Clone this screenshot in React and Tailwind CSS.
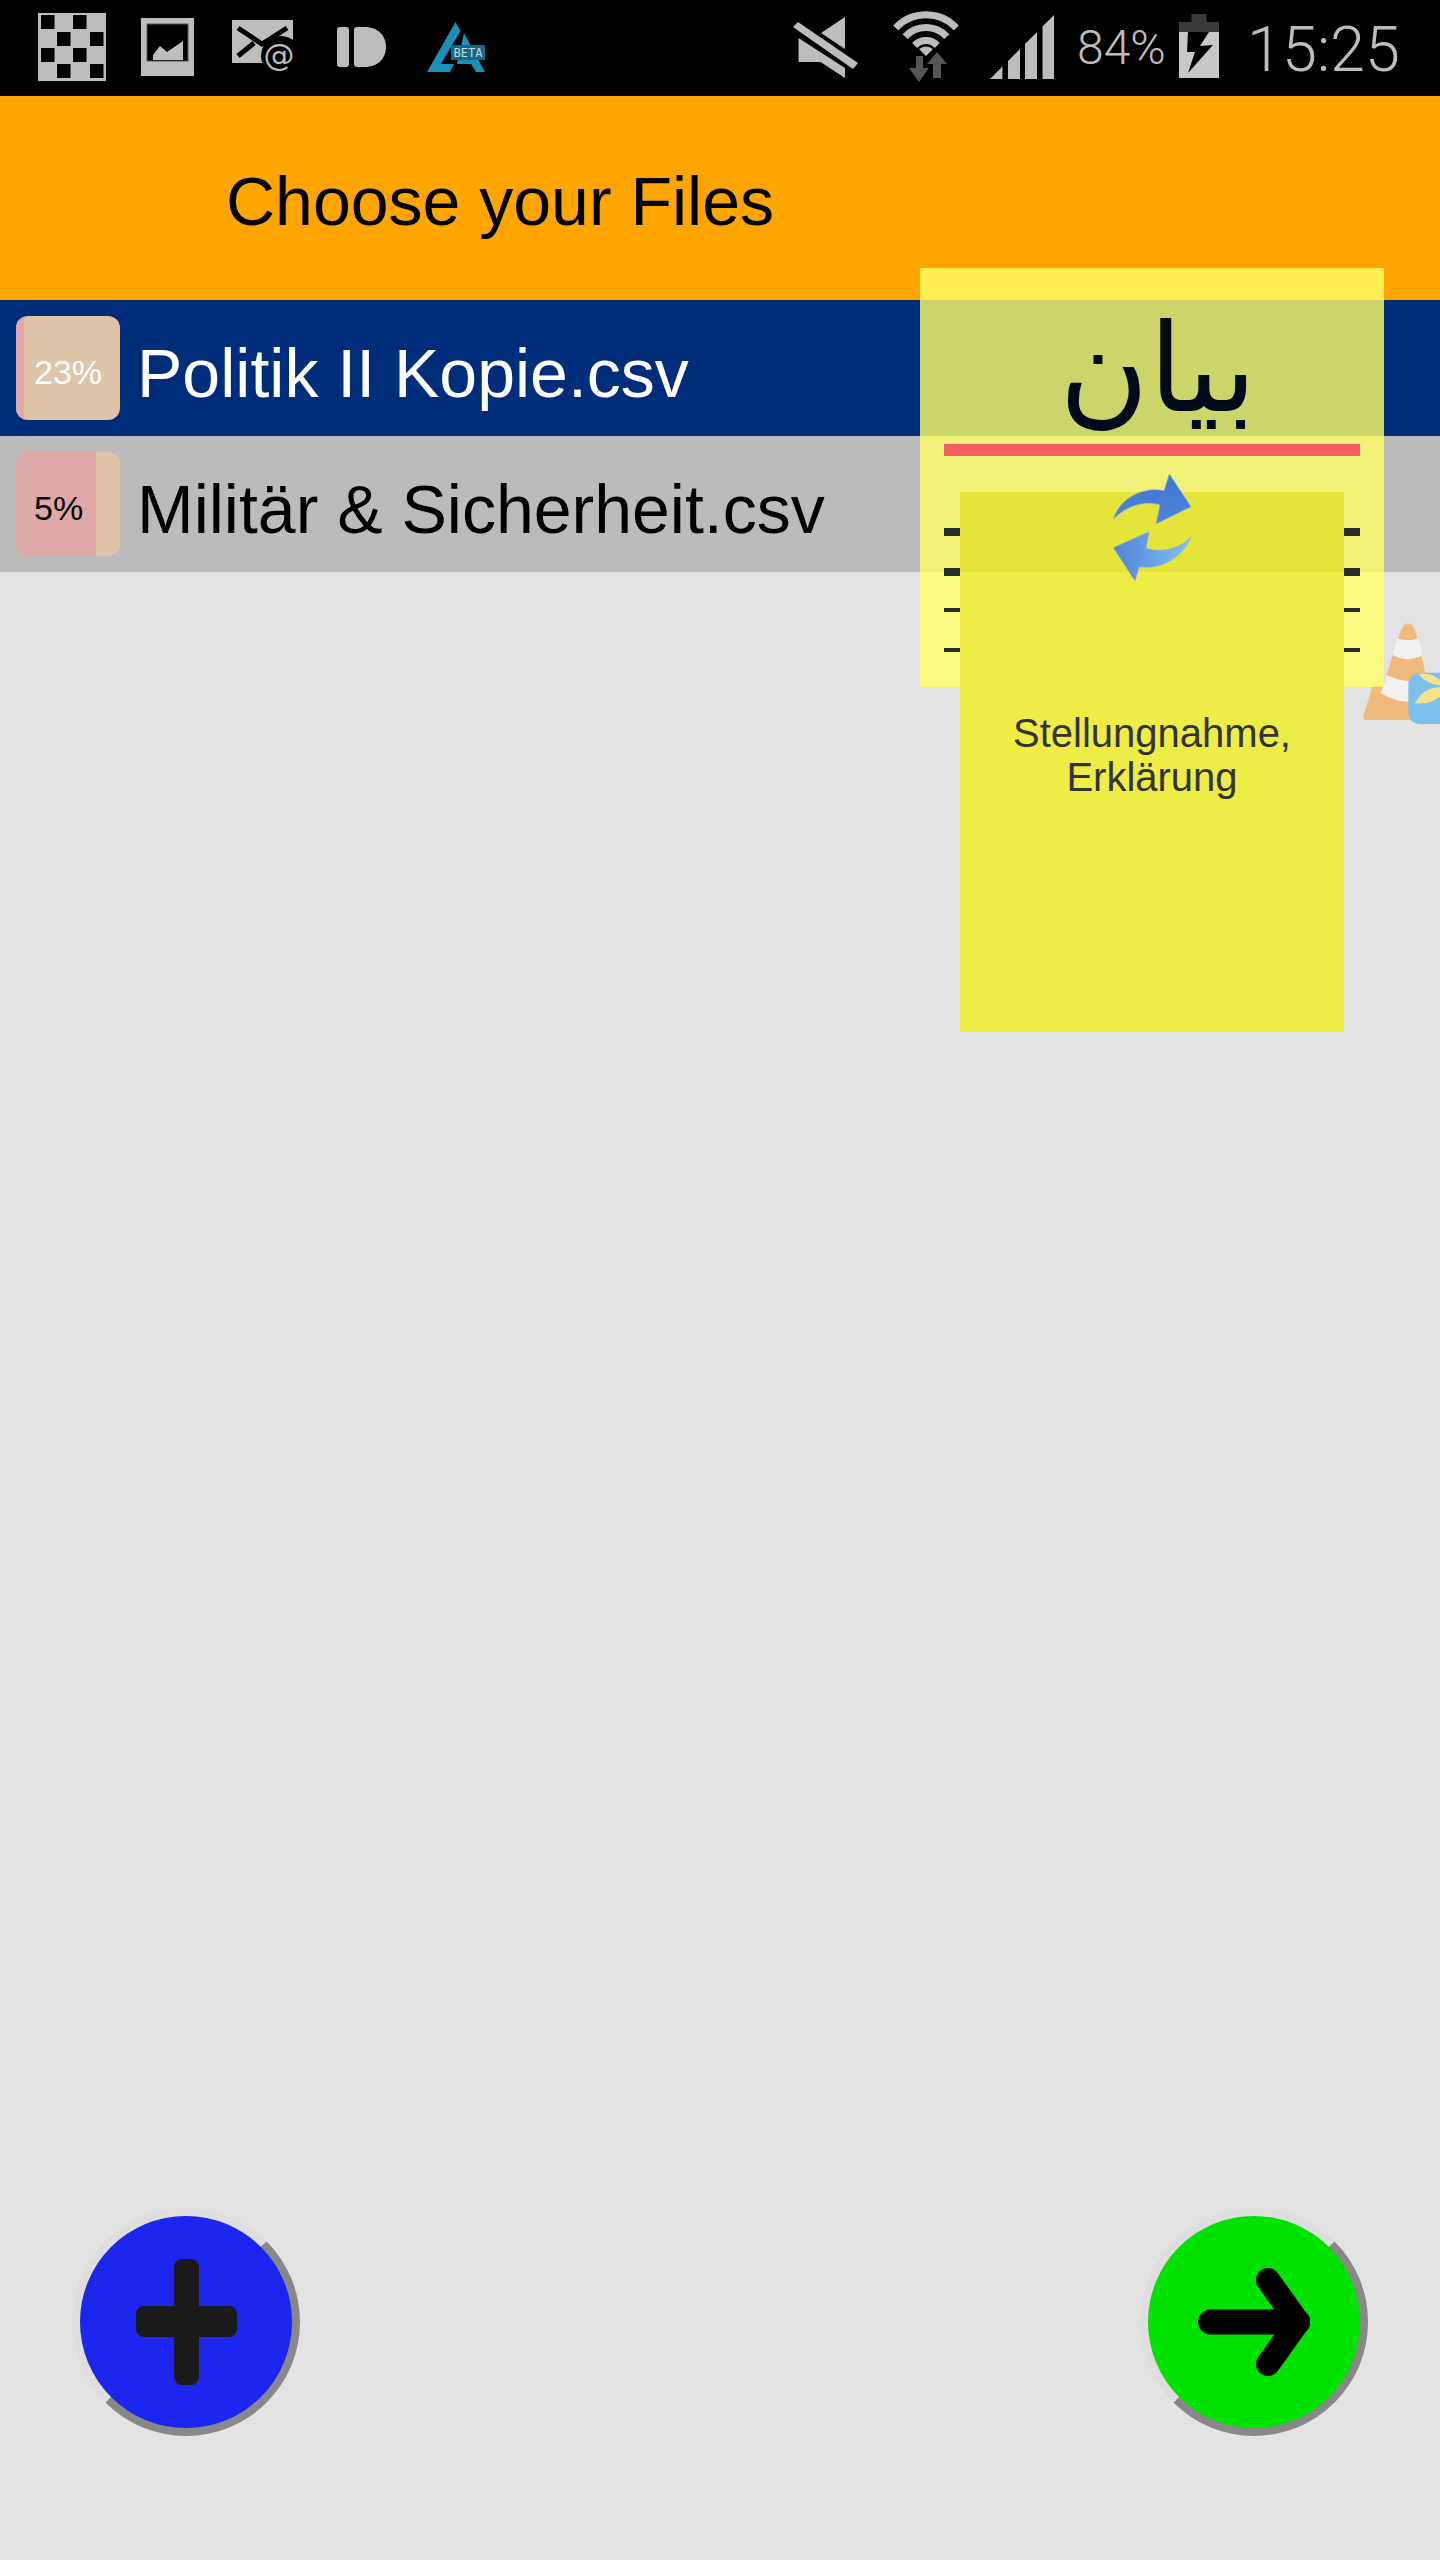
import React from 'react';

const GRAY = '#bdbdbd';

// checker / notification icon, all status icons use the 96px bar height as their y scale
const CheckerIcon = () => {
  const holes = [
    [3, 2], [35, 2], [19, 19], [52, 19],
    [3, 35], [35, 35], [19, 51], [52, 51],
  ];
  return (
    <svg width="68" height="96" viewBox="0 0 68 96" className="shrink-0">
      <rect x="0" y="13" width="68" height="68" fill={GRAY} />
      {holes.map(([x, y]) => (
        <rect key={`${x}-${y}`} x={x} y={y + 13} width="13.5" height="14" fill="#000" />
      ))}
    </svg>
  );
};

const PictureIcon = () => (
  <svg width="53" height="96" viewBox="0 0 53 96" className="ml-[35px] shrink-0">
    <rect x="0" y="18" width="53" height="58" fill={GRAY} />
    <rect x="6" y="24" width="41" height="37" fill="#000" stroke="#555" strokeWidth="1" />
    <path d="M12 60 L12 55 L19 46 L26 52 L42 41 L42 60 Z" fill={GRAY} />
  </svg>
);

const MailIcon = () => (
  <svg width="64" height="96" viewBox="0 0 64 96" className="ml-[38px] shrink-0">
    <rect x="0" y="20" width="61" height="43" fill={GRAY} />
    <path d="M6 28 L30 44 L55 28 M6 56 L22 43" stroke="#000" strokeWidth="5" fill="none" />
    <circle cx="49" cy="56" r="20" fill="#000" />
    <text x="47" y="66" textAnchor="middle" fill={GRAY} fontSize="31" fontFamily="'DejaVu Sans', sans-serif">@</text>
  </svg>
);

const IdIcon = () => (
  <svg width="49" height="96" viewBox="0 0 49 96" className="ml-[41px] shrink-0">
    <rect x="0" y="27" width="12" height="40" rx="3" fill={GRAY} />
    <path d="M17 30 Q17 27 20 27 L28 27 C41 27 49 36 49 47 C49 58 41 67 28 67 L20 67 Q17 67 17 64 Z" fill={GRAY} />
  </svg>
);

const BetaIcon = () => (
  <svg width="58" height="96" viewBox="0 0 58 96" className="ml-[41px] shrink-0">
    <path d="M0 72 L28.5 22 L33.5 31 L14 64 L27 64 L23 72 Z" fill="#1a90b8" />
    <path d="M37 33 L58 72 L49 72 L44 64 L30 64 Z" fill="#1a90b8" />
    <rect x="24" y="45" width="34" height="15" fill="#0f6a8c" />
    <text x="41" y="57" textAnchor="middle" fill="#c6d6dc" fontSize="12" fontFamily="'DejaVu Sans Mono', monospace">BETA</text>
  </svg>
);

const MuteIcon = () => (
  <svg width="66" height="96" viewBox="0 0 66 96" className="shrink-0">
    <path d="M52 17 L52 49 L28 33 Z" fill={GRAY} />
    <path d="M5.5 38 L52 68 L52 78 L27.5 62 L5.5 62 Z" fill={GRAY} />
    <path d="M5 22 L65 63 L60 69 L0 27 Z" fill={GRAY} />
  </svg>
);

const WifiIcon = () => (
  <svg width="66" height="96" viewBox="0 0 66 96" className="ml-[34px] shrink-0">
    <g stroke={GRAY} strokeWidth="7" fill="none">
      <path d="M2.7 27.8 A41.5 41.5 0 0 1 63.3 27.8" />
      <path d="M12.2 36.6 A28.5 28.5 0 0 1 53.8 36.6" />
      <path d="M21.7 45.5 A15.5 15.5 0 0 1 44.3 45.5" />
    </g>
    <path d="M33 56 L26 49 Q33 44 40 49 Z" fill={GRAY} />
    <path d="M23 56 H30 V68 H36 L26 82 L16 68 H23 Z" fill="#555" />
    <path d="M44 52 L54 64 H48 V78 H40 V64 H34 Z" fill="#555" />
  </svg>
);

const SignalIcon = () => (
  <svg width="64" height="96" viewBox="0 0 64 96" className="ml-[31px] shrink-0">
    <path d="M0 79 L12.4 79 L12.4 66.6 Z" fill={GRAY} />
    <path d="M18 79 L30 79 L30 49 L18 61 Z" fill={GRAY} />
    <path d="M35 79 L47 79 L47 32 L35 44 Z" fill={GRAY} />
    <path d="M52.5 79 L64 79 L64 15 L52.5 26.5 Z" fill={GRAY} />
  </svg>
);

const BatteryIcon = () => (
  <svg width="40" height="96" viewBox="0 0 40 96" className="shrink-0">
    <rect x="12.5" y="14" width="15" height="8" fill="#3a3a3a" />
    <rect x="0" y="22" width="40" height="10" fill="#3a3a3a" />
    <rect x="0" y="32" width="40" height="46" fill="#c8c8c8" />
    <path d="M9 32 L30 32 L21 46 L34 45 L9 73 L16 52 L8 52 Z" fill="#000" />
  </svg>
);

const StatusBar = () => (
  <div className="flex h-[96px] items-start bg-black pl-[38px] pr-[42px] font-['Roboto',sans-serif]">
    <CheckerIcon />
    <PictureIcon />
    <MailIcon />
    <IdIcon />
    <BetaIcon />
    <div className="ml-auto flex items-start">
      <MuteIcon />
      <WifiIcon />
      <SignalIcon />
      <span className="ml-[23px] mt-[21px] w-[102px] whitespace-nowrap text-[48px] leading-[54px] font-light text-[#bdbdbd]">84%</span>
      <BatteryIcon />
      <span className="ml-[28px] mt-[13px] w-[151px] whitespace-nowrap text-[63px] leading-[74px] font-light text-[#bdbdbd]">15:25</span>
    </div>
  </div>
);

const FileRow = ({ name, percent, barWidth, active }) => (
  <div className={`flex h-[136px] items-center pl-[16px] ${active ? 'bg-[#002d79] text-white' : 'bg-[#bbbbbb] text-black'}`}>
    <div className="relative h-[104px] w-[104px] shrink-0 overflow-hidden rounded-[12px] bg-[#e0c4a8]">
      <div className="h-full bg-[#e0a8a8]" style={{ width: barWidth }} />
      <span className="absolute left-[18px] top-[4px] text-[34px] leading-[104px]">{percent}</span>
    </div>
    <span className="ml-[17px] mt-[10px] text-[68px] leading-none">{name}</span>
  </div>
);

const RoundButton = ({ color, children }) => (
  <div className="flex h-[228px] w-[228px] items-center justify-center rounded-full border-8 border-t-[#dedede] border-l-[#dedede] border-r-[#888888] border-b-[#888888]" style={{ backgroundColor: color }}>
    {children}
  </div>
);

const SyncArrows = () => (
  <svg width="84" height="114" viewBox="96 66 252 342" className="absolute left-[1112px] top-[472px]">
    <defs>
      <linearGradient id="syncTop" x1="0" y1="0" x2="0" y2="1">
        <stop offset="0" stopColor="#3f74d0" />
        <stop offset="1" stopColor="#5286da" />
      </linearGradient>
      <linearGradient id="syncBottom" x1="0" y1="0" x2="1" y2="0">
        <stop offset="0" stopColor="#5182d8" />
        <stop offset="1" stopColor="#82c0f4" />
      </linearGradient>
    </defs>
    <path d="M100 208 C118 145 190 108 252 122 L268 72 L333 170 L228 222 L240 165 C190 150 135 170 100 208 Z" fill="url(#syncTop)" stroke="#8eaee0" strokeWidth="2" strokeLinejoin="round" />
    <path d="M333 260 C310 320 240 362 178 350 L165 393 L100 293 L207 245 L198 295 C250 310 300 295 333 260 Z" fill="url(#syncBottom)" stroke="#8eaee0" strokeWidth="2" strokeLinejoin="round" />
  </svg>
);

// faded launcher icons behind the floating note
const DesktopIcons = () => (
  <svg width="100" height="140" viewBox="0 0 300 420" className="absolute left-[1340px] top-[600px]">
    <path d="M105 255 L280 255 L300 360 L80 360 Q66 360 71 345 L96 265 Q99 255 105 255 Z" fill="#f0b97c" />
    <path d="M180 100 Q190 70 204 70 Q218 70 228 100 L272 285 Q200 325 122 280 Z" fill="#f0b97c" />
    <path d="M170 115 Q203 127 235 115 L248 165 Q203 190 159 165 Z" fill="#f1f1f1" />
    <path d="M140 225 Q200 255 262 235 L272 290 Q200 325 122 280 Z" fill="#f1f1f1" />
    <rect x="205" y="218" width="140" height="154" rx="34" fill="#7cc0ec" />
    <path d="M225 310 Q250 262 300 262 L300 290 Q265 315 225 310 Z" fill="#f0e38c" />
    <path d="M235 222 Q270 215 300 240 L300 256 Q262 255 235 222 Z" fill="#f0e38c" />
  </svg>
);

export default function App() {
  return (
    <div className="relative flex h-[2560px] w-full flex-col overflow-hidden bg-[#e3e3e3] font-['Liberation_Sans',sans-serif]">
      <StatusBar />

      <div className="flex h-[204px] items-center bg-[#ffa500] pl-[226px] pt-[6px] text-[68px] text-black">
        Choose your Files
      </div>

      <FileRow name="Politik II Kopie.csv" percent="23%" barWidth={8} active />
      <FileRow name="Militär & Sicherheit.csv" percent="5%" barWidth={80} />

      <div className="mt-auto mb-[124px] flex justify-between px-[72px]">
        <RoundButton color="#1c26ee">
          <svg width="101" height="126" viewBox="0 0 101 126">
            <rect x="38" y="0" width="25" height="126" rx="8" fill="#1a1a1a" />
            <rect x="0" y="47" width="101" height="31" rx="8" fill="#1a1a1a" />
          </svg>
        </RoundButton>
        <RoundButton color="#00e300">
          <svg width="112" height="110" viewBox="0 0 112 110">
            <path d="M12.5 55 H100" stroke="#000" strokeWidth="25" strokeLinecap="round" />
            <path d="M70 13 L100 55 L70 97" stroke="#000" strokeWidth="24" strokeLinecap="round" strokeLinejoin="round" fill="none" />
          </svg>
        </RoundButton>
      </div>

      <DesktopIcons />

      {/* floating note with the word card on top of it */}
      <div className="absolute left-[920px] top-[268px] h-[419px] w-[464px] bg-[#ffff66]/80">
        <div className="flex h-[176px] items-center justify-center pl-[12px] pt-[26px] font-['DejaVu_Sans',sans-serif] text-[122px] leading-none text-[#000a18]">
          بيان
        </div>
        <div className="absolute left-[24px] right-[24px] top-[176px] h-[12px] bg-[#f55c5c]" />
        <div className="absolute left-[24px] right-[24px] top-[260px] h-[8px] bg-[#2a2a2a]" />
        <div className="absolute left-[24px] right-[24px] top-[300px] h-[8px] bg-[#2a2a2a]" />
        <div className="absolute left-[24px] right-[24px] top-[340px] h-[4px] bg-[#2a2a2a]" />
        <div className="absolute left-[24px] right-[24px] top-[380px] h-[4px] bg-[#2a2a2a]" />
      </div>

      <div className="absolute left-[960px] top-[492px] flex h-[540px] w-[384px] flex-col items-center bg-[#eded45]">
        <div className="h-[80px] w-full shrink-0 bg-[#e4e43b]" />
        <p className="mt-[139px] text-center text-[40px] leading-[44px] text-[#333333]">
          Stellungnahme,
          <br />
          Erklärung
        </p>
      </div>

      <SyncArrows />
    </div>
  );
}
